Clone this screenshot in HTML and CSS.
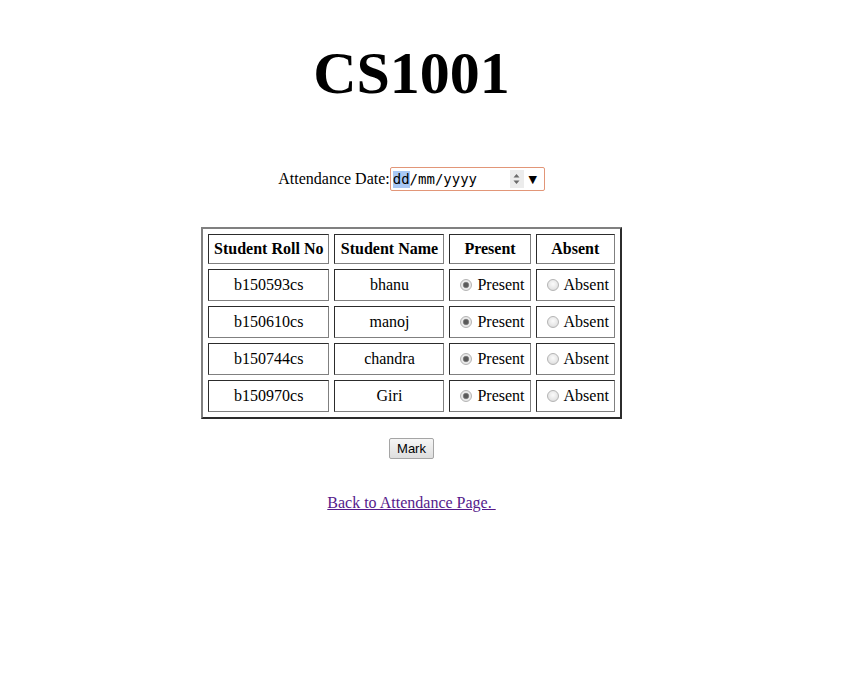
FILE: index.html
```html
<!DOCTYPE html>
<html>
<head>
<meta charset="utf-8">
<title>CS1001</title>
<link rel="stylesheet" href="styles.css">
</head>
<body>
<div class="page">
  <h1 class="title">CS1001</h1>
  <form class="form">
    <div class="date-row">
      <label class="date-label">Attendance Date:</label><span class="date-input"><span class="seg sel">dd</span><span class="seg">/mm/yyyy</span><span class="spin"><svg width="9" height="14" viewBox="0 0 9 14"><path d="M1.5 5.5 L4.5 2 L7.5 5.5 Z M1.5 8.5 L4.5 12 L7.5 8.5 Z" fill="#6b6b6b"/></svg></span><span class="drop">▼</span></span>
    </div>
    <table class="att">
      <tr><th>Student Roll No</th><th class="name-col">Student Name</th><th>Present</th><th>Absent</th></tr>
      <tr><td>b150593cs</td><td>bhanu</td><td><input type="radio" class="rb" name="r1" checked>Present</td><td><input type="radio" class="rb" name="r1">Absent</td></tr>
      <tr><td>b150610cs</td><td>manoj</td><td><input type="radio" class="rb" name="r2" checked>Present</td><td><input type="radio" class="rb" name="r2">Absent</td></tr>
      <tr><td>b150744cs</td><td>chandra</td><td><input type="radio" class="rb" name="r3" checked>Present</td><td><input type="radio" class="rb" name="r3">Absent</td></tr>
      <tr><td>b150970cs</td><td>Giri</td><td><input type="radio" class="rb" name="r4" checked>Present</td><td><input type="radio" class="rb" name="r4">Absent</td></tr>
    </table>
    <div class="btn-row"><button type="button" class="mark">Mark</button></div>
  </form>
  <p class="back"><a href="#" class="back-link">Back to Attendance Page.&nbsp;</a></p>
</div>
</body>
</html>
```
FILE: styles.css
```css
html, body {
  margin: 0;
  padding: 0;
  background: #fff;
}
body {
  font-family: "Liberation Serif", "Times New Roman", serif;
  font-size: 16px;
  color: #000;
}
.page {
  padding: 8px 33px 8px 8px;
  text-align: center;
}
.title {
  font-size: 60px;
  font-weight: bold;
  margin: 32px 0 0;
  line-height: 66px;
}
.form {
  margin-top: 61px;
}
.date-row {
  height: 24px;
  display: flex;
  justify-content: center;
  align-items: center;
}
.date-label {
  line-height: 18px;
}
.date-input {
  display: inline-flex;
  align-items: center;
  box-sizing: border-box;
  width: 155px;
  height: 24px;
  border: 1px solid #e29678;
  border-radius: 2px;
  padding: 0 2px 0 2px;
  font-family: "DejaVu Sans Mono", "Liberation Mono", monospace;
  font-size: 14px;
  text-align: left;
}
.seg {
  line-height: 17px;
}
.seg.sel {
  background: #a9c8f5;
}
.spin {
  margin-left: auto;
  width: 14px;
  height: 18px;
  background: #ececec;
  display: flex;
  align-items: center;
  justify-content: center;
}
.drop {
  font-family: "DejaVu Sans", sans-serif;
  font-size: 11px;
  width: 18px;
  text-align: center;
  color: #000;
}
.att {
  margin: 36px auto 0;
  border: 2px outset #808080;
  border-spacing: 5px;
  border-collapse: separate;
}
.att th, .att td {
  border: 1px inset #808080;
  padding: 5px;
  text-align: center;
}
.att .name-col {
  min-width: 98px;
}
.att td {
  line-height: 20px;
}
.rb {
  -webkit-appearance: none;
  appearance: none;
  box-sizing: border-box;
  width: 12px;
  height: 12px;
  margin: 0 5px 0 5px;
  border: 1px solid #b4b4b4;
  border-radius: 50%;
  background: radial-gradient(circle at 50% 40%, #fbfbfb 0%, #e6e6e6 60%, #cfcfcf 100%);
  vertical-align: -1px;
}
.rb:checked {
  background: radial-gradient(circle, #5a5a5a 0, #5a5a5a 2px, #9a9a9a 3px, #ececec 3.6px, #dcdcdc 100%);
}
.btn-row {
  margin-top: 19px;
}
.mark {
  font-family: "Liberation Sans", Arial, sans-serif;
  font-size: 13px;
  padding: 1px 6px;
  height: 21px;
  width: 45px;
  border: 1px solid #a5a5a5;
  border-radius: 2px;
  background: linear-gradient(#f6f6f6, #dedede);
  color: #000;
}
.back {
  margin: 35px 0 0;
}
.back-link {
  color: #551a8b;
}
```
